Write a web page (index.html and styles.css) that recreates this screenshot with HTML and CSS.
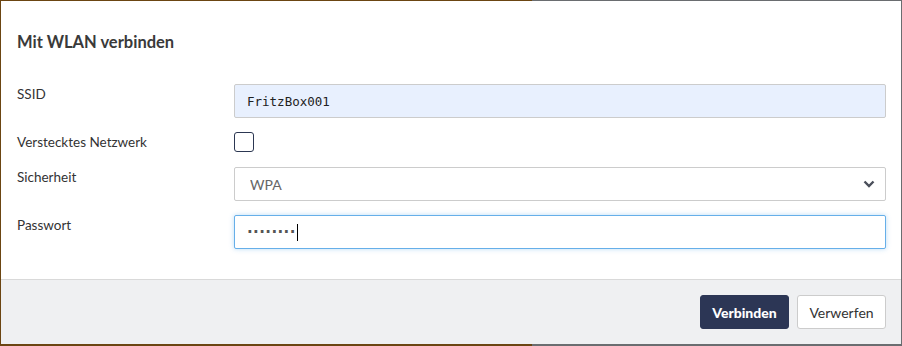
FILE: index.html
```html
<!DOCTYPE html>
<html>
<head>
    <title>Mit WLAN verbinden</title>
    <link rel="stylesheet" href="styles.css">
</head>
<body>
    <div class="modal">
        <header class="modal-header">
            <h4>Mit WLAN verbinden</h4>
        </header>
        <form class="modal-body">
            <div class="form-row">
                <label for="ssid">SSID</label>
                <input type="text" id="ssid" class="form-control autofill" value="FritzBox001">
            </div>

            <div class="form-row row-check">
                <label for="hidden">Verstecktes Netzwerk</label>
                <span class="check-box" id="hidden"></span>
            </div>

            <div class="form-row row-select">
                <label for="security">Sicherheit</label>
                <div class="select-wrap">
                    <select id="security" class="form-control">
                        <option>WPA</option>
                        <option>WPA2</option>
                        <option>WEP</option>
                        <option>Keine</option>
                    </select>
                    <svg class="chevron" width="12" height="8" viewBox="0 0 12 8">
                        <path d="M1.5 1.5 L6 6 L10.5 1.5" fill="none" stroke="#4a4f5a" stroke-width="2.4"/>
                    </svg>
                </div>
            </div>

            <div class="form-row">
                <label for="password">Passwort</label>
                <div class="form-control focused" id="password">
                    <span class="dots">&middot;&middot;&middot;&middot;&middot;&middot;&middot;&middot;</span><span class="caret"></span>
                </div>
            </div>
        </form>
        <footer class="modal-footer">
            <button type="button" class="btn btn-primary">Verbinden</button>
            <button type="button" class="btn btn-default">Verwerfen</button>
        </footer>
    </div>
</body>
</html>
```

FILE: styles.css
```css
html, body {
    margin: 0;
    padding: 0;
}

body {
    font-family: 'Lato', 'Open Sans', sans-serif;
    background: linear-gradient(to right, #6b4512 0%, #6b4512 59%, #6a6d70 59%, #6a6d70 100%);
    padding: 1px 1px 2px 1px;
    width: 900px;
    height: 343px;
}

.modal {
    background-color: #fff;
    width: 900px;
    height: 343px;
    display: flex;
    flex-direction: column;
}

.modal-header {
    height: 64px;
    padding: 0 16px;
    display: flex;
    align-items: center;
}

.modal-header h4 {
    margin: 0;
    margin-top: 18px;
    font-size: 16.5px;
    font-weight: 700;
    color: #3a3a3a;
}

.modal-body {
    padding: 20px 15px 30px 16px;
    display: flex;
    flex-direction: column;
    gap: 14px;
}

.form-row {
    display: grid;
    grid-template-columns: 217px 1fr;
    align-items: start;
}

.form-row label {
    font-size: 13.5px;
    line-height: 18px;
    color: #333;
    padding-top: 1px;
}

.row-select {
    margin-top: 1px;
}

.form-control {
    box-sizing: border-box;
    height: 34px;
    width: 100%;
    border: 1px solid #ccc;
    border-radius: 2px;
    background-color: #fff;
    font-size: 14px;
    color: #555;
    padding: 0 12px;
    margin: 0;
    outline: none;
}

.autofill {
    background-color: #e8f0fe;
    font-family: 'DejaVu Sans Mono', monospace;
    font-size: 12.5px;
    color: #222;
}

.check-box {
    display: block;
    width: 18px;
    height: 18px;
    border: 1px solid #2c3752;
    border-radius: 3px;
}

.select-wrap {
    position: relative;
}

.select-wrap select {
    appearance: none;
    -webkit-appearance: none;
    font-family: 'Lato', sans-serif;
    padding-left: 15px;
    color: #666;
}

.chevron {
    position: absolute;
    right: 11px;
    top: 13px;
    pointer-events: none;
}

.focused {
    border-color: #66afe9;
    box-shadow: 0 0 5px rgba(102, 175, 233, 0.45);
    display: flex;
    align-items: center;
}

.dots {
    font-family: 'DejaVu Sans', sans-serif;
    font-size: 15px;
    font-weight: bold;
    letter-spacing: 0.4px;
    color: #555;
}

.caret {
    display: inline-block;
    width: 1px;
    height: 17px;
    background-color: #000;
    margin-left: 1px;
}

.modal-footer {
    margin-top: auto;
    border-top: 1px solid #d9d9d9;
    background-color: #eff0f2;
    padding: 15px;
    display: flex;
    justify-content: flex-end;
    gap: 8px;
}

.btn {
    box-sizing: border-box;
    width: 89px;
    height: 34px;
    font-family: 'Lato', sans-serif;
    font-size: 14px;
    border-radius: 3px;
    cursor: pointer;
}

.btn-primary {
    background-color: #2c3655;
    border: 1px solid #2c3655;
    color: #fff;
    font-weight: 900;
}

.btn-default {
    background-color: #fff;
    border: 1px solid #ccc;
    color: #333;
}
```
